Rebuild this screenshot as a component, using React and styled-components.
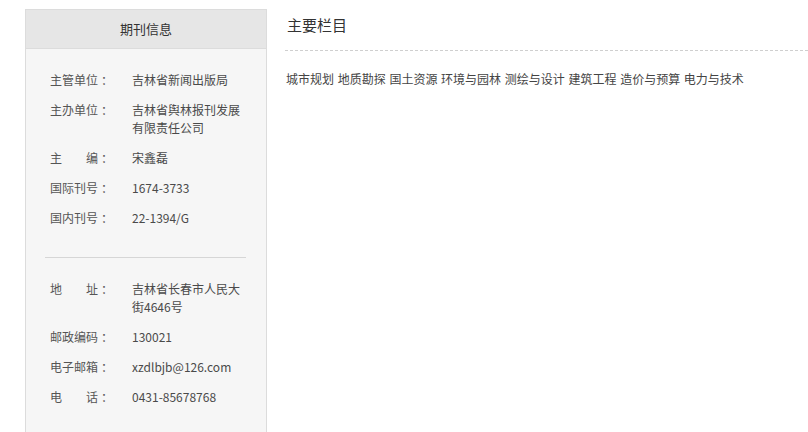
import React from "react";
import styled, { createGlobalStyle } from "styled-components";

const Global = createGlobalStyle`
  body {
    margin: 0;
    background: #fff;
    font-family: "Noto Sans CJK SC", "Liberation Sans", sans-serif;
    color: #333;
  }
`;

const Page = styled.div`
  display: flex;
  align-items: flex-start;
  gap: 18px;
  padding: 9px 0 0 25px;
  height: 423px;
  overflow: hidden;
`;

const Side = styled.div`
  width: 240px;
  flex-shrink: 0;
  border: 1px solid #dcdcdc;
  background: #f6f6f6;
  height: 460px;
`;

const SideHead = styled.div`
  height: 38px;
  line-height: 38px;
  text-align: center;
  font-size: 13px;
  color: #333;
  background: #e6e6e6;
  border-bottom: 1px solid #dcdcdc;
`;

const Group = styled.div`
  padding: ${(p) => p.pad || "22px 0 0 24px"};
`;

const Row = styled.div`
  display: flex;
  font-size: 12px;
  line-height: 18px;
  margin-bottom: 12px;
  color: #4a4a4a;
`;

const Label = styled.div`
  width: 82px;
  flex-shrink: 0;
  display: flex;
  color: #555;
`;

const LabelText = styled.span`
  width: 48px;
  display: flex;
  justify-content: space-between;
`;

const Colon = styled.span`
  padding-left: 3px;
`;

const Value = styled.div`
  width: 112px;
`;

const Divider = styled.div`
  margin: 30px 20px 0 19px;
  border-top: 1px solid #d6d6d6;
`;

const Main = styled.div`
  flex: 1;
  padding-top: 5px;
`;

const Title = styled.div`
  font-size: 15px;
  color: #333;
  line-height: 22px;
  padding-left: 2px;
  padding-bottom: 14px;
  border-bottom: 1px dashed #cfcfcf;
`;

const Columns = styled.div`
  font-size: 12px;
  line-height: 18px;
  color: #444;
  word-spacing: 1px;
  padding: 19px 0 0 1px;
`;

const top = [
  ["主管单位", "吉林省新闻出版局"],
  ["主办单位", "吉林省舆林报刊发展有限责任公司"],
  ["主编", "宋鑫磊"],
  ["国际刊号", "1674-3733"],
  ["国内刊号", "22-1394/G"],
];

const bottom = [
  ["地址", "吉林省长春市人民大街4646号"],
  ["邮政编码", "130021"],
  ["电子邮箱", "xzdlbjb@126.com"],
  ["电话", "0431-85678768"],
];

function Info({ label, value }) {
  return (
    <Row>
      <Label>
        <LabelText>
          {label.split("").map((c, i) => (
            <span key={i}>{c}</span>
          ))}
        </LabelText>
        <Colon>：</Colon>
      </Label>
      <Value>{value}</Value>
    </Row>
  );
}

export default function App() {
  return (
    <>
      <Global />
      <Page>
        <Side>
          <SideHead>期刊信息</SideHead>
          <Group>
            {top.map(([l, v]) => (
              <Info key={l} label={l} value={v} />
            ))}
          </Group>
          <Divider />
          <Group pad="22px 0 0 24px">
            {bottom.map(([l, v]) => (
              <Info key={l} label={l} value={v} />
            ))}
          </Group>
        </Side>
        <Main>
          <Title>主要栏目</Title>
          <Columns>
            城市规划 地质勘探 国土资源 环境与园林 测绘与设计 建筑工程 造价与预算 电力与技术
          </Columns>
        </Main>
      </Page>
    </>
  );
}
